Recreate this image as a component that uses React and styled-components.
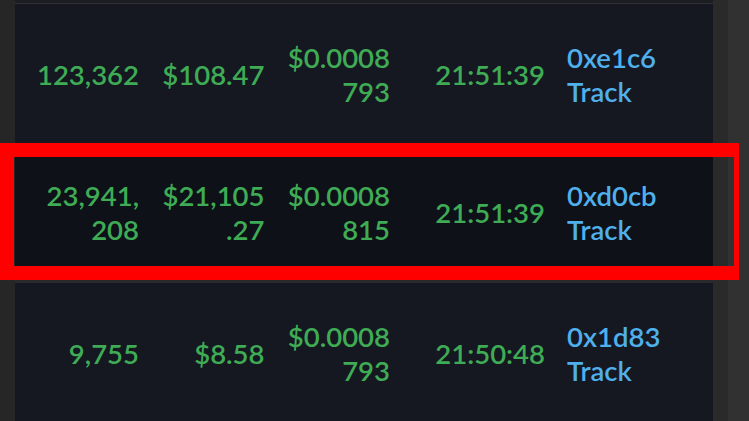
import React from 'react';
import styled, { createGlobalStyle } from 'styled-components';

const GlobalStyle = createGlobalStyle`
  html, body {
    margin: 0;
    padding: 0;
    background: #262626;
    overflow: hidden;
  }
`;

const Page = styled.div`
  position: relative;
  display: flex;
  width: 749px;
  height: 421px;
  overflow: hidden;
  font-family: Lato, "Open Sans", sans-serif;
`;

const Gutter = styled.div`
  width: ${p => p.w}px;
  flex: none;
  background: ${p => p.bg};
`;

const Table = styled.div`
  width: 698px;
  flex: none;
  display: flex;
  flex-direction: column;
  background: #151821;
`;

const TopEdge = styled.div`
  height: 3px;
  background: #1c1d21;
  border-bottom: 1px solid #2c2f36;
  flex: none;
`;

const Row = styled.div`
  display: grid;
  grid-template-columns: 105px 105px 105px 134.5px 1fr;
  column-gap: 20.5px;
  align-items: center;
  height: ${p => p.h}px;
  padding-left: 19px;
  background: ${p => (p.active ? '#0e1118' : '#151821')};
  border-bottom: ${p => (p.divider ? '3px solid #2a2a2c' : 'none')};
  flex: none;
`;

const Cell = styled.div`
  text-align: right;
  color: #3fac55;
  font-size: 27.5px;
  font-weight: 600;
  line-height: 34px;
  overflow-wrap: anywhere;
`;

const Wallet = styled.div`
  display: flex;
  flex-direction: column;
  padding-left: 1.5px;
  color: #4fb0ec;
  font-size: 27.5px;
  font-weight: 600;
  line-height: 34px;
`;

const Highlight = styled.div`
  position: absolute;
  left: 0;
  top: 143px;
  width: 739px;
  height: 137px;
  box-sizing: border-box;
  border: 14px solid #ff0000;
  border-right-width: 5px;
  pointer-events: none;
`;

const trades = [
  { amount: '123,362', usd: '$108.47', price: '$0.0008793', time: '21:51:39', wallet: '0xe1c6', h: 141 },
  { amount: '23,941,208', usd: '$21,105.27', price: '$0.0008815', time: '21:51:39', wallet: '0xd0cb', h: 135, active: true, divider: true },
  { amount: '9,755', usd: '$8.58', price: '$0.0008793', time: '21:50:48', wallet: '0x1d83', h: 142 },
];

export default function App() {
  return (
    <>
      <GlobalStyle />
      <Page>
        <Gutter w={15} bg="#262626" />
        <Table>
          <TopEdge />
          {trades.map((t, i) => (
            <Row key={i} active={t.active} divider={t.divider} h={t.h}>
              <Cell>{t.amount}</Cell>
              <Cell>{t.usd}</Cell>
              <Cell>{t.price}</Cell>
              <Cell>{t.time}</Cell>
              <Wallet>
                <span>{t.wallet}</span>
                <span>Track</span>
              </Wallet>
            </Row>
          ))}
        </Table>
        <Gutter w={15} bg="#2a2a2a" />
        <Gutter w={21} bg="#313131" />
        <Highlight />
      </Page>
    </>
  );
}
